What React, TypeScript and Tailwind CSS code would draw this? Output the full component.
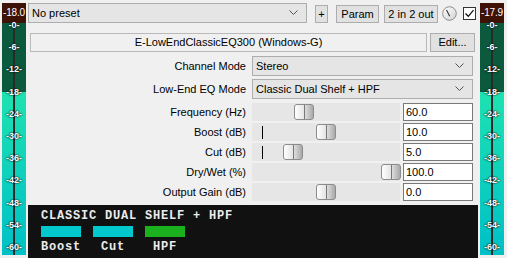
import React from "react";

const ticks = ["-0-", "-6-", "-12-", "-18-", "-24-", "-30-", "-36-", "-42-", "-48-", "-54-", "-60-"];

function Meter({ peak }: { peak: string }) {
  return (
    <div className="flex flex-col w-[24px] h-[252px]">
      <div className="h-[20px] bg-[#3e1206] text-white text-[10px] leading-none flex items-center justify-center tracking-[-0.2px]">
        {peak}
      </div>
      <div className="relative flex-1 flex flex-col">
        <div className="h-[69px] bg-[#0b5a3d]" />
        <div className="flex-1 bg-gradient-to-b from-[#1ee2b0] to-[#00c0c6]" />
        <div className="absolute left-[11px] top-0 bottom-0 w-[2px] bg-[#2a2a2a]" />
        {ticks.map((t, i) => (
          <div
            key={t}
            className="absolute left-0 right-0 text-center text-white text-[9px] font-bold leading-[10px] [text-shadow:0_0_1px_#000,0_0_2px_#000]"
            style={{ top: 2 + i * 22.2 - 5 }}
          >
            {t}
          </div>
        ))}
      </div>
    </div>
  );
}

function Chevron() {
  return (
    <svg width="9" height="6" viewBox="0 0 9 6" className="shrink-0">
      <path d="M0.5 0.5 L4.5 4.5 L8.5 0.5" fill="none" stroke="#555" strokeWidth="1" />
    </svg>
  );
}

function Combo({ text, className }: { text: string; className: string }) {
  return (
    <div className={`h-[20px] bg-[#e5e5e5] border border-[#adadad] flex items-center pl-[3px] pr-[8px] ${className}`}>
      <span className="flex-1 text-[11px] text-black">{text}</span>
      <Chevron />
    </div>
  );
}

function Btn({ text, className }: { text: string; className: string }) {
  return (
    <div className={`h-[18px] bg-[#e1e1e1] border border-[#adadad] flex items-center justify-center text-[11px] text-black ${className}`}>
      {text}
    </div>
  );
}

const sliders = [
  { label: "Frequency (Hz)", pos: 42, value: "60.0", tick: false },
  { label: "Boost (dB)", pos: 64, value: "10.0", tick: true },
  { label: "Cut (dB)", pos: 31, value: "5.0", tick: true },
  { label: "Dry/Wet (%)", pos: 129, value: "100.0", tick: false },
  { label: "Output Gain (dB)", pos: 64, value: "0.0", tick: false },
];

function Thumb({ pos }: { pos: number }) {
  return (
    <div
      className="absolute top-[1px] w-[20px] h-[16px] rounded-[3px] border border-[#8c8c8c] bg-gradient-to-r from-[#ffffff] via-[#e4e4e4] to-[#a9a9a9] flex justify-center"
      style={{ left: pos }}
    >
      <div className="w-[1px] h-full bg-[#777]" />
    </div>
  );
}

export default function App() {
  return (
    <div className="w-[507px] h-[258px] bg-[#f0f0f0] flex font-['Liberation_Sans',Arial,sans-serif] overflow-hidden">
      <div className="pl-[2px] pt-[3px]">
        <Meter peak="-18.0" />
      </div>
      <div className="ml-[2px] w-[450px] flex flex-col pt-[3px]">
        {/* row 1 */}
        <div className="flex items-start h-[20px]">
          <Combo text="No preset" className="w-[279px]" />
          <Btn text="+" className="ml-[8px] mt-[2px] w-[13px]" />
          <Btn text="Param" className="ml-[8px] mt-[2px] w-[43px]" />
          <Btn text="2 in 2 out" className="ml-[5px] mt-[2px] w-[54px]" />
          <svg width="15" height="15" viewBox="0 0 15 15" className="ml-[4px] mt-[3px]">
            <defs>
              <linearGradient id="kg" x1="0" y1="0" x2="1" y2="1">
                <stop offset="0" stopColor="#ffffff" />
                <stop offset="1" stopColor="#d2d2d2" />
              </linearGradient>
            </defs>
            <circle cx="7.5" cy="7.5" r="6.8" fill="url(#kg)" stroke="#8a8a8a" strokeWidth="1" />
            <line x1="4.5" y1="4" x2="7.7" y2="10.3" stroke="#333" strokeWidth="1.1" />
          </svg>
          <div className="ml-[6px] mt-[4px] w-[13px] h-[13px] bg-white border border-[#333] flex items-center justify-center">
            <svg width="11" height="11" viewBox="0 0 11 11">
              <path d="M1.5 5.5 L4.3 8.3 L9.5 2.2" fill="none" stroke="#111" strokeWidth="1.3" />
            </svg>
          </div>
        </div>
        {/* row 2 */}
        <div className="flex mt-[10px] h-[19px] pl-[2px]">
          <div className="w-[397px] h-[19px] bg-[#f0f0f0] border border-[#b9b9b9] flex items-center justify-center text-[11px] text-black">
            E-LowEndClassicEQ300 (Windows-G)
          </div>
          <Btn text="Edit..." className="ml-[3px] w-[45px] h-[19px]" />
        </div>
        {/* params */}
        <div className="flex flex-col mt-[4px]">
          <div className="flex items-center h-[20px]">
            <div className="w-[218px] text-right text-[11px] text-black">Channel Mode</div>
            <Combo text="Stereo" className="ml-[6px] w-[221px]" />
          </div>
          <div className="flex items-center h-[20px] mt-[3px]">
            <div className="w-[218px] text-right text-[11px] text-black">Low-End EQ Mode</div>
            <Combo text="Classic Dual Shelf + HPF" className="ml-[6px] w-[221px]" />
          </div>
          <div className="flex flex-col gap-[2px] mt-[4px]">
            {sliders.map((s) => (
              <div key={s.label} className="flex items-center h-[18px]">
                <div className="w-[218px] text-right text-[11px] text-black">{s.label}</div>
                <div className="ml-[6px] relative w-[148px] h-[18px] bg-[#e6e6e6]">
                  {s.tick && <div className="absolute left-[10px] top-[3px] w-[1px] h-[13px] bg-black" />}
                  <Thumb pos={s.pos} />
                </div>
                <div className="ml-[3px] w-[70px] h-[18px] bg-white border border-[#7a7a7a] flex items-center pl-[2px] text-[11px] text-black">
                  {s.value}
                </div>
              </div>
            ))}
          </div>
        </div>
        {/* dark display */}
        <div className="mt-[4px] h-[53px] bg-[#111111] pl-[13px] pt-[5px] font-['Liberation_Mono',monospace] font-bold text-[#ececec] text-[12px] leading-[12px]">
          <div className="tracking-[0.8px] whitespace-pre">CLASSIC DUAL SHELF + HPF</div>
          <div className="flex gap-[12px] mt-[4px]">
            <div className="w-[40px] h-[11px] bg-[#00c8cc]" />
            <div className="w-[40px] h-[11px] bg-[#00c8cc]" />
            <div className="w-[40px] h-[11px] bg-[#1bb01e]" />
          </div>
          <div className="flex gap-[12px] mt-[4px]">
            <div className="w-[40px] text-center tracking-[0.8px]">Boost</div>
            <div className="w-[40px] text-center tracking-[0.8px]">Cut</div>
            <div className="w-[40px] text-center tracking-[0.8px]">HPF</div>
          </div>
        </div>
      </div>
      <div className="ml-[2px] pt-[3px]">
        <Meter peak="-17.9" />
      </div>
    </div>
  );
}
